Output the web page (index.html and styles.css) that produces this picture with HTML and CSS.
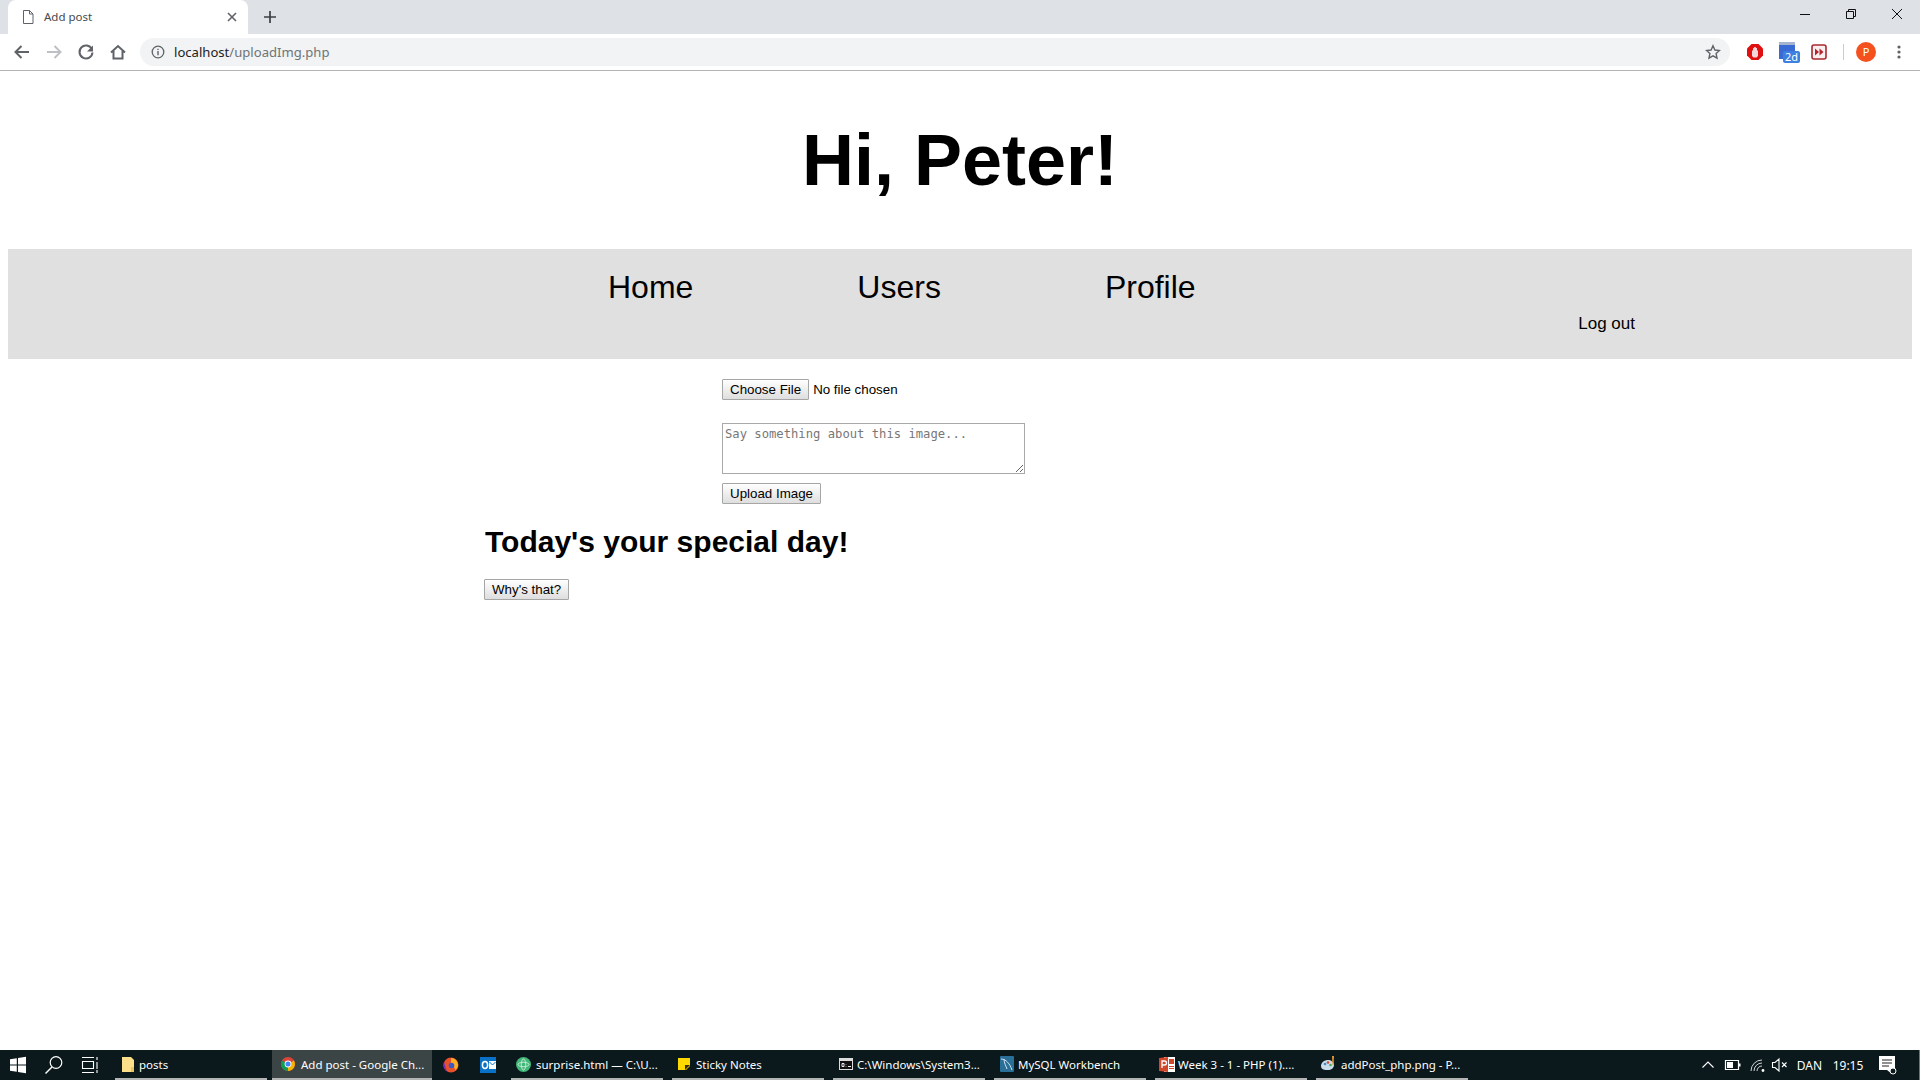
FILE: index.html
```html
<!DOCTYPE html>
<html lang="en">
<head>
<meta charset="utf-8">
<title>Add post</title>
<link rel="stylesheet" href="styles.css">
</head>
<body>
<div class="window">
  <header class="chrome">
    <div class="tabstrip">
      <div class="tab">
        <svg class="tab-icon" width="12" height="14" viewBox="0 0 12 14"><path d="M1.5.5h6l3.5 3.5v9.5h-9.5zM7.5.5V4H11" fill="#fff" stroke="#5f6368"/></svg>
        <span class="tab-title">Add post</span>
        <svg class="tab-close" width="10" height="10" viewBox="0 0 10 10"><path d="M1 1l8 8M9 1l-8 8" stroke="#5f6368" stroke-width="1.6"/></svg>
      </div>
      <svg class="new-tab" width="12" height="12" viewBox="0 0 12 12"><path d="M6 0v12M0 6h12" stroke="#3c4043" stroke-width="1.7"/></svg>
      <div class="window-controls">
        <svg class="win-btn" width="46" height="28" viewBox="0 0 46 28"><path d="M18 14.500h10" stroke="#111"/></svg>
        <svg class="win-btn" width="46" height="28" viewBox="0 0 46 28"><path d="M18.500 11.500h7v7h-7zM20.500 11.500v-2h7v7h-2" fill="none" stroke="#111"/></svg>
        <svg class="win-btn" width="46" height="28" viewBox="0 0 46 28"><path d="M18 9l10 10M28 9L18 19" stroke="#111"/></svg>
      </div>
    </div>
    <div class="toolbar">
      <svg class="tool" width="32" height="28" viewBox="0 0 32 28"><path d="M23 14H10M15.500 8L9.500 14l6 6" fill="none" stroke="#5f6368" stroke-width="2"/></svg>
      <svg class="tool" width="32" height="28" viewBox="0 0 32 28"><path d="M9 14h13M16.500 8l6 6-6 6" fill="none" stroke="#bdc1c6" stroke-width="2"/></svg>
      <svg class="tool" width="32" height="28" viewBox="0 0 32 28"><path d="M21.800 11a6.500 6.500 0 1 0 .7 3.500" fill="none" stroke="#5f6368" stroke-width="2"/><path d="M23 7.500v6h-6z" fill="#5f6368"/></svg>
      <svg class="tool" width="32" height="28" viewBox="0 0 32 28"><path d="M9 14.500L16 8l7 6.500M11.500 13v7.500h9V13" fill="none" stroke="#5f6368" stroke-width="2"/></svg>
      <div class="omnibox">
        <svg class="info" width="14" height="14" viewBox="0 0 14 14"><circle cx="7" cy="7" r="5.800" fill="none" stroke="#5f6368" stroke-width="1.300"/><path d="M7 6v4.200M7 3.700v1.300" stroke="#5f6368" stroke-width="1.400"/></svg>
        <span class="url"><span class="url-host">localhost</span>/uploadImg.php</span>
        <svg class="star" width="16" height="16" viewBox="0 0 16 16"><path d="M8 1.800l1.900 4.200 4.600.5-3.400 3.100.9 4.500L8 11.800l-4 2.300.9-4.500L1.500 6.500l4.600-.5z" fill="none" stroke="#5f6368" stroke-width="1.400"/></svg>
      </div>
      <div class="extensions">
        <svg class="ext ext-opera" width="18" height="18" viewBox="0 0 18 18"><path d="M5.500 1h7L17 5.500v7L12.500 17h-7L1 12.500v-7z" fill="#e01010"/><path d="M6 13V7.500h1V5h1.200v-1h1.600v1H11v2.500h1V13l-1.500 1.500h-3z" fill="#f6d6d6"/></svg>
        <span class="ext ext-cal">
          <svg width="22" height="24" viewBox="0 0 22 24"><path d="M1 2h16v3H1z" fill="#a6b4d0"/><path d="M1 5h16v14H1z" fill="#3a6bd4"/></svg>
          <span class="cal-badge">2d</span>
        </span>
        <svg class="ext ext-ff" width="16" height="16" viewBox="0 0 16 16"><rect x="1" y="1" width="14" height="14" rx="2" fill="#fbeeee" stroke="#a82a30" stroke-width="1.600"/><path d="M4 4.500l4 3.500-4 3.500zM8.500 4.500l4 3.500-4 3.500z" fill="#b3242c"/></svg>
        <span class="toolbar-sep"></span>
        <span class="avatar">P</span>
        <svg class="menu" width="4" height="14" viewBox="0 0 4 14"><circle cx="2" cy="2" r="1.600" fill="#5f6368"/><circle cx="2" cy="7" r="1.600" fill="#5f6368"/><circle cx="2" cy="12" r="1.600" fill="#5f6368"/></svg>
      </div>
    </div>
  </header>

  <main class="page">
    <h1 class="greeting">Hi, Peter!</h1>
    <nav class="site-nav">
      <a class="nav-link" href="#">Home</a>
      <a class="nav-link" href="#">Users</a>
      <a class="nav-link" href="#">Profile</a>
      <a class="logout" href="#">Log out</a>
    </nav>
    <form class="upload-form">
      <input class="file-input" type="file">
      <textarea class="caption" placeholder="Say something about this image..."></textarea>
      <button class="btn" type="button">Upload Image</button>
    </form>
    <section class="special">
      <h2 class="special-title">Today's your special day!</h2>
      <button class="btn" type="button">Why's that?</button>
    </section>
  </main>

  <footer class="taskbar">
    <svg class="sys-icon" width="36" height="30" viewBox="0 0 36 30"><path d="M10 9.200l6.800-1v6.300H10zM18 8l8-1.200v7.700h-8zM10 15.500h6.800v6.300l-6.800-1zM18 15.500h8v7.700L18 22z" fill="#fff"/></svg>
    <svg class="sys-icon" width="36" height="30" viewBox="0 0 36 30"><circle cx="20" cy="12.500" r="5.800" fill="none" stroke="#fff" stroke-width="1.200"/><path d="M16 17l-6.500 6.500" stroke="#fff" stroke-width="1.400"/></svg>
    <svg class="sys-icon sys-task" width="36" height="30" viewBox="0 0 36 30"><path d="M10.500 11.500h11v7h-11zM10 7.500h12M10 22.500h12M25 7v3M25 12v7M25 20v3" fill="none" stroke="#fff" stroke-width="1.100"/></svg>
    <div class="task task-posts">
      <svg width="14" height="17" viewBox="0 0 14 17"><path d="M1 1h9l3 3v12H1z" fill="#ffe08a"/><path d="M10 11h3v5h-3z" fill="#eec25c"/></svg>
      <span>posts</span>
    </div>
    <div class="task task-active">
      <svg width="14" height="14" viewBox="0 0 14 14"><circle cx="7" cy="7" r="7" fill="#db4437"/><path d="M7 7L1 3.500A7 7 0 0 0 7 14z" fill="#0f9d58"/><path d="M7 7l6-3.500A7 7 0 0 1 7 14z" fill="#f4b400"/><circle cx="7" cy="7" r="3.400" fill="#fff"/><circle cx="7" cy="7" r="2.500" fill="#4285f4"/></svg>
      <span>Add post - Google Ch...</span>
    </div>
    <svg class="pin pin-first" width="16" height="16" viewBox="0 0 16 16"><circle cx="8" cy="8" r="7.500" fill="#e8502a"/><path d="M1 5a7.500 7.500 0 0 0 3 9.500z" fill="#7a2fb5"/><path d="M8 1a7 7 0 0 1 7 7c0 2-1 4-2.500 5-1-3-3-5-4.500-5.500z" fill="#ffb020"/><circle cx="8.500" cy="8.500" r="2.800" fill="#3d57c8"/></svg>
    <svg class="pin" width="16" height="16" viewBox="0 0 16 16"><rect width="16" height="16" fill="#0a72c6"/><rect x="9" y="4" width="7" height="8" fill="#fff"/><path d="M9.500 5l3 3 3-3" fill="none" stroke="#0a72c6"/><ellipse cx="5" cy="8" rx="2.600" ry="3.400" fill="none" stroke="#fff" stroke-width="1.500"/></svg>
    <div class="task task-surprise">
      <svg width="15" height="15" viewBox="0 0 15 15"><circle cx="7.500" cy="7.500" r="7.500" fill="#43b77a"/><ellipse cx="7.500" cy="7.500" rx="5.500" ry="2.200" fill="none" stroke="#d8f5e4" stroke-width=".8"/><ellipse cx="7.500" cy="7.500" rx="2.200" ry="5.500" fill="none" stroke="#d8f5e4" stroke-width=".8"/></svg>
      <span>surprise.html — C:\U...</span>
    </div>
    <div class="task">
      <svg width="12" height="12" viewBox="0 0 12 12"><path d="M0 0h12v8l-4 4H0z" fill="#ffd800"/><path d="M7 7h5l-5 5z" fill="#3a3000"/></svg>
      <span>Sticky Notes</span>
    </div>
    <div class="task task-tight">
      <svg width="14" height="12" viewBox="0 0 14 12"><rect x=".5" y=".5" width="13" height="11" fill="#111" stroke="#ddd"/><rect x="1" y="1" width="12" height="2" fill="#ddd"/><path d="M3 5.500h2v3H3zM7 6v.5M7 8v.5M9 8.500h3" stroke="#eee" fill="none"/></svg>
      <span>C:\Windows\System3...</span>
    </div>
    <div class="task task-tight">
      <svg width="14" height="16" viewBox="0 0 14 16"><rect width="14" height="16" rx="1" fill="#2a6f97"/><path d="M1 3c5 0 9 5 11 11M4 3c0 4 2 7 3 10" fill="none" stroke="#cfe3ef"/></svg>
      <span>MySQL Workbench</span>
    </div>
    <div class="task task-week">
      <svg width="16" height="15" viewBox="0 0 16 15"><path d="M5 0h11v15H5z" fill="#fff"/><path d="M0 1l9-1v15l-9-1z" fill="#d2472a"/><path d="M10 2h5v5h-5zM10 9h5v1h-5zM10 11h5v1h-5z" fill="#d2472a"/><path d="M3 11V4h2.500a1.800 1.800 0 0 1 0 4H3" fill="none" stroke="#fff" stroke-width="1.300"/></svg>
      <span>Week 3 - 1 - PHP (1)....</span>
    </div>
    <div class="task task-paint">
      <svg width="16" height="16" viewBox="0 0 16 16"><path d="M0 10c0-4 4-6 7-6s6 2 6 5-3 5-6 5-7 0-7-4z" fill="#c8dcec"/><path d="M11 0h2l-.5 9h-1z" fill="#e89a2c"/><circle cx="4" cy="8" r="1.300" fill="#3c88c8"/><circle cx="7" cy="6.500" r="1.300" fill="#dd4433"/><circle cx="9.500" cy="9" r="1.300" fill="#55aa55"/></svg>
      <span>addPost_php.png - P...</span>
    </div>
    <div class="tray">
      <svg class="tray-icon" width="24" height="30" viewBox="0 0 24 30"><path d="M5.500 17.500l5.500-5.500 5.500 5.500" fill="none" stroke="#fff" stroke-width="1.100"/></svg>
      <svg class="tray-icon" width="24" height="30" viewBox="0 0 24 30"><path d="M4.500 10.500h13v9h-13z" fill="none" stroke="#fff" stroke-width="1.200"/><path d="M6 12h6v6H6z" fill="#fff"/><path d="M18 13.500h1.500v3H18z" fill="#fff"/></svg>
      <svg class="tray-icon" width="24" height="30" viewBox="0 0 24 30"><path d="M6 21a11 11 0 0 1 11-11M9 21a8 8 0 0 1 8-8M12 21a5 5 0 0 1 5-5" fill="none" stroke="#cfd4d6" stroke-width="1"/><circle cx="18" cy="20.500" r="1.400" fill="#fff"/></svg>
      <svg class="tray-icon tray-mute" width="20" height="30" viewBox="0 0 20 30"><path d="M3.500 12.500H6l4-3.500v12l-4-3.500H3.500zM13 12.500l4.500 4.500M17.500 12.500L13 17" fill="none" stroke="#fff" stroke-width="1.100"/></svg>
      <span class="tray-text tray-lang">DAN</span>
      <span class="tray-text tray-time">19:15</span>
      <svg class="tray-icon tray-notify" width="42" height="30" viewBox="0 0 42 30"><path d="M13 6h16v14h-3v4l-5-4h-8z" fill="#fff"/><path d="M16 10h10M16 13h10M16 16h7" stroke="#222" stroke-width="1"/><circle cx="27" cy="21" r="3" fill="#0d1a1e" stroke="#fff"/></svg>
      <span class="show-desktop"></span>
    </div>
  </footer>
</div>
</body>
</html>
```
FILE: styles.css
```css
* { box-sizing: border-box; }

html, body { margin: 0; height: 100%; }

body {
  background: #fff;
  color: #000;
  font-family: "Liberation Sans", Arial, sans-serif;
  overflow: hidden;
}

.window {
  display: flex;
  flex-direction: column;
  height: 1080px;
}

/* Browser chrome */
.chrome { flex: none; height: 71px; border-bottom: 1px solid #b4b4b4; }

.tabstrip {
  display: flex;
  align-items: center;
  height: 34px;
  padding-left: 8px;
  background: #dee1e6;
}

.tab {
  display: flex;
  align-items: center;
  width: 240px;
  height: 34px;
  padding: 0 11px 0 14px;
  background: #fff;
  border-radius: 8px 8px 0 0;
}

.tab-icon { flex: none; }

.tab-title {
  flex: 1;
  margin-left: 10px;
  padding-bottom: 1px;
  font: 11.500px "Noto Sans", "Open Sans", sans-serif;
  color: #45494d;
}

.new-tab { margin-left: 16px; }

.window-controls { display: flex; margin-left: auto; align-self: flex-start; }

.win-btn { display: block; }

.toolbar {
  display: flex;
  align-items: center;
  height: 36px;
  padding-left: 6px;
  background: #fff;
}

.tool { flex: none; }

.omnibox {
  display: flex;
  align-items: center;
  flex: none;
  width: 1590px;
  height: 28px;
  margin-left: 6px;
  padding: 0 9px 0 11px;
  background: #f1f3f4;
  border-radius: 14px;
}

.info { flex: none; }

.url {
  flex: 1;
  margin-left: 9px;
  font: 13.100px "Noto Sans", "Open Sans", sans-serif;
  color: #6f7377;
}

.url-host { color: #202124; }

.star { flex: none; }

.extensions { display: flex; align-items: center; margin-left: 16px; }

.ext { flex: none; }

.ext-cal {
  position: relative;
  display: block;
  width: 22px;
  height: 24px;
  margin-left: 14px;
}

.cal-badge {
  position: absolute;
  left: 5px;
  top: 11px;
  width: 17px;
  height: 12px;
  background: #3d80e0;
  border-radius: 2px;
  color: #fff;
  font: 11px/12px "Noto Sans", sans-serif;
  text-align: center;
}

.ext-ff { margin-left: 11px; }

.toolbar-sep {
  width: 1px;
  height: 16px;
  margin-left: 16px;
  background: #ccc;
}

.avatar {
  width: 20px;
  height: 20px;
  margin-left: 12px;
  background: #f4511e;
  border-radius: 50%;
  color: #fff;
  font: 11px/20px "Noto Sans", sans-serif;
  text-align: center;
}

.menu { margin-left: 21px; }

/* Page */
.page { flex: 1; padding: 0 8px; min-height: 0; }

.greeting {
  margin: 48px 0 47px;
  font-size: 72px;
  font-weight: 700;
  line-height: 83px;
  text-align: center;
}

.site-nav {
  display: flex;
  align-items: flex-start;
  gap: 164px;
  height: 110px;
  padding: 20px 277px 0 600px;
  background: #e0e0e0;
}

.nav-link {
  color: #000;
  font-size: 32px;
  line-height: 37px;
  text-decoration: none;
}

.logout {
  margin: 45px 0 0 auto;
  color: #000;
  font-size: 17px;
  line-height: 20px;
  text-decoration: none;
}

.upload-form {
  display: flex;
  flex-direction: column;
  align-items: flex-start;
  padding: 20px 0 0 714px;
}

.file-input {
  width: 300px;
  height: 21px;
  margin-bottom: 23px;
  font: 13.333px "Liberation Sans", Arial, sans-serif;
}

.file-input::file-selector-button {
  height: 21px;
  margin-right: 4px;
  padding: 0 7px;
  background: linear-gradient(#fff, #dedede);
  border: 1px solid #a6a6a6;
  border-radius: 1px;
  color: #000;
  font: 13.333px "Liberation Sans", Arial, sans-serif;
}

.caption {
  display: block;
  width: 303px;
  height: 51px;
  margin: 0 0 9px;
  padding: 3px 2px 2px;
  border: 1px solid #a9a9a9;
  border-radius: 0;
  font: 12.200px "DejaVu Sans Mono", monospace;
}

.caption::placeholder { color: #777; }

.btn {
  height: 21px;
  padding: 0 7px;
  background: linear-gradient(#fff, #dedede);
  border: 1px solid #a6a6a6;
  border-radius: 1px;
  color: #000;
  font: 13.333px "Liberation Sans", Arial, sans-serif;
}

.special { padding-left: 476px; }

.special-title {
  margin: 20px 0 19px;
  padding-left: 1px;
  font-size: 30px;
  font-weight: 700;
  line-height: 36px;
}

/* Taskbar */
.taskbar {
  display: flex;
  flex: none;
  align-items: center;
  height: 30px;
  background: #0b191d;
  color: #fff;
  font: 11.500px "Noto Sans", "Open Sans", sans-serif;
}

.sys-icon { flex: none; display: block; }

.sys-task { margin-right: 3px; }

.task {
  position: relative;
  display: flex;
  flex: none;
  align-items: center;
  gap: 6px;
  width: 161px;
  height: 30px;
  padding: 0 0 2px 10px;
  white-space: nowrap;
}

.task::after {
  content: "";
  position: absolute;
  left: 4px;
  right: 5px;
  bottom: 0;
  height: 2px;
  background: #b3b5b5;
}

.task svg { flex: none; }

.task-posts, .task-tight { gap: 4px; }

.task-active { width: 160px; padding-left: 9px; background: #3c4546; }

.task-active::after { left: 0; right: 0; }

.task-surprise { margin-left: 1px; padding-left: 9px; gap: 5px; }

.task-week { padding-left: 8px; gap: 3px; }

.task-paint { padding-left: 9px; gap: 4px; }

.pin { flex: none; margin: 0 10px; }

.pin-first { margin: 0 11px; }

.tray {
  display: flex;
  align-items: center;
  height: 30px;
  margin-left: auto;
  font-size: 12px;
}

.tray-icon { display: block; flex: none; }

.tray-text { text-align: center; white-space: nowrap; }

.tray-lang { width: 41px; }

.tray-time { width: 36px; }

.show-desktop {
  width: 12px;
  height: 30px;
  border-right: 1px solid #6d7477;
}
```
